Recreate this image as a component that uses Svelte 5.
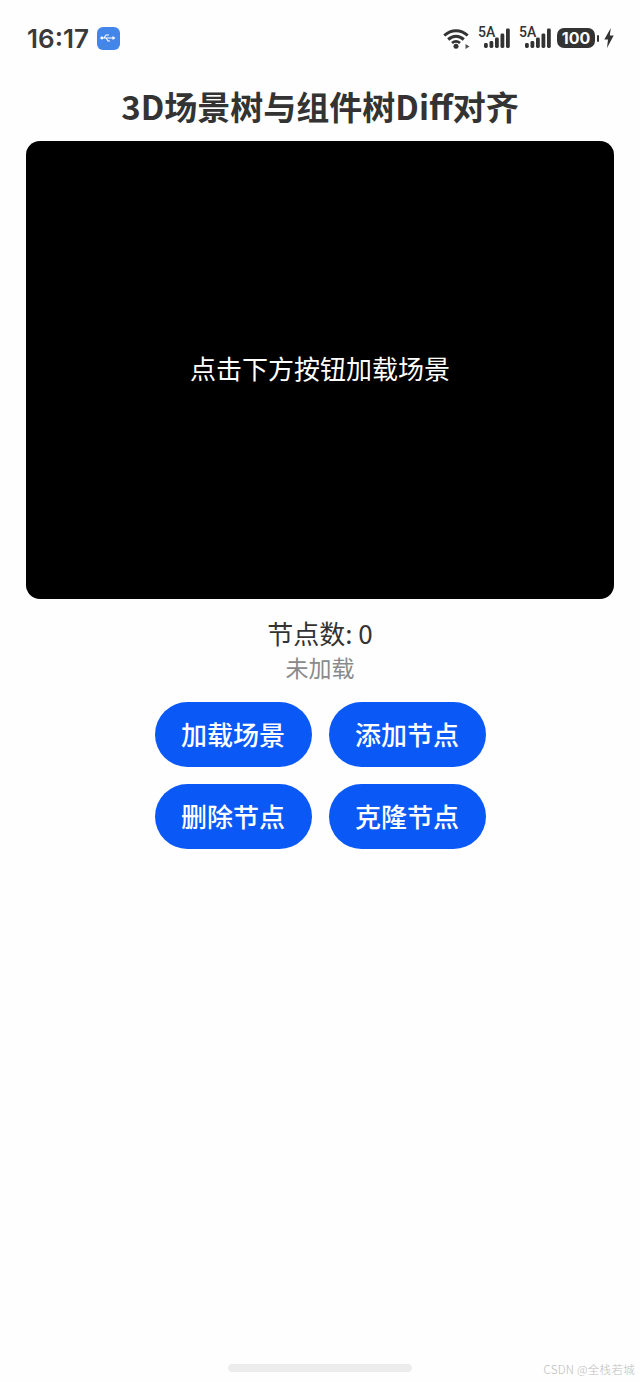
<script lang="ts">
	let nodeCount = $state(0);
	let status = $state('未加载');

	const actions = ['加载场景', '添加节点', '删除节点', '克隆节点'];
</script>

<div class="page">
	<header class="status-bar">
		<div class="status-left">
			<span class="clock">16:17</span>
			<span class="usb-badge">
				<svg width="16" height="10" viewBox="0 0 16 10">
					<path d="M1 5h12M4 5l2-3h3M6 5l2 3h2" fill="none" stroke="#fff" stroke-width="1.1" />
					<path d="M12.5 3l3 2-3 2z" fill="#fff" />
					<circle cx="1.8" cy="5" r="1.4" fill="#fff" />
				</svg>
			</span>
		</div>
		<div class="status-right">
			<svg class="wifi" width="27" height="21" viewBox="0 0 27 21">
				<path d="M1.300 7.500C8.300 1 17.700 1 24.700 7.500" fill="none" stroke="#333" stroke-width="3" />
				<path d="M5.200 11.500C10 7.300 16 7.300 20.800 11.500" fill="none" stroke="#333" stroke-width="3" />
				<path d="M9 15C11.500 13 14.500 13 17 15" fill="none" stroke="#333" stroke-width="2.800" />
				<circle cx="13" cy="18.300" r="2.500" fill="#333" />
				<path d="M22.500 16l4 2.500-4 2.500z" fill="#555" />
			</svg>
			{#each [0, 1] as sim}
				<span class="signal" data-sim={sim}>
					<span class="sim-label">5A</span>
					<svg width="27" height="21" viewBox="0 0 27 21">
						<rect x="0" y="15" width="3.800" height="5" rx="1.400" fill="#333" />
						<rect x="5.500" y="13" width="3.800" height="7" rx="1.400" fill="#333" />
						<rect x="11" y="9.500" width="3.800" height="10.500" rx="1.400" fill="#333" />
						<rect x="16.500" y="5.500" width="3.800" height="14.500" rx="1.400" fill="#333" />
						<rect x="22" y="0.500" width="3.800" height="19.500" rx="1.400" fill="#333" />
					</svg>
				</span>
			{/each}
			<span class="battery">
				<span class="battery-body">100</span>
				<span class="battery-cap"></span>
			</span>
			<svg class="bolt" width="10" height="20" viewBox="0 0 10 20">
				<path d="M6.800 0L0.300 11.500H4L3 20L9.700 7.500H5.800z" fill="#333" />
			</svg>
		</div>
	</header>

	<main class="content">
		<h1 class="title">3D场景树与组件树Diff对齐</h1>

		<div class="viewport">
			<span>点击下方按钮加载场景</span>
		</div>

		<div class="node-count">节点数: {nodeCount}</div>
		<div class="load-status">{status}</div>

		<div class="actions">
			{#each actions as label}
				<button class="action-btn">{label}</button>
			{/each}
		</div>
	</main>

	<footer class="bottom">
		<div class="home-bar"></div>
		<span class="watermark">CSDN @全栈若城</span>
	</footer>
</div>

<style>
	:global(body) {
		margin: 0;
		background: #fff;
	}

	.page {
		height: 1382px;
		display: flex;
		flex-direction: column;
		background: #fefefe;
		font-family: "Noto Sans CJK SC", "Noto Sans", sans-serif;
		color: #333;
		overflow: hidden;
	}

	.status-bar {
		height: 76px;
		padding: 0 26px 0 27px;
		box-sizing: border-box;
		display: flex;
		justify-content: space-between;
		align-items: center;
		flex-shrink: 0;
	}

	.status-left,
	.status-right {
		display: flex;
		align-items: center;
	}

	.status-left {
		gap: 8px;
	}

	.clock {
		font-family: Inter, "Noto Sans", sans-serif;
		font-size: 26px;
		font-weight: 600;
		color: #3a3a3a;
	}

	.usb-badge {
		width: 23px;
		height: 23px;
		border-radius: 6px;
		background: #4485ea;
		display: flex;
		align-items: center;
		justify-content: center;
	}

	.signal {
		position: relative;
		display: flex;
		justify-content: flex-end;
		height: 21px;
		width: 33px;
		margin-left: 8px;
	}

	.signal svg {
		display: block;
	}

	.sim-label {
		position: absolute;
		left: 0;
		top: -3px;
		font-family: Roboto, sans-serif;
		font-size: 14px;
		font-weight: 500;
		line-height: 14px;
		color: #333;
	}

	.battery {
		display: flex;
		align-items: center;
		gap: 2px;
		margin-left: 5px;
	}

	.battery-body {
		width: 38px;
		height: 20px;
		border-radius: 7px;
		background: #333;
		color: #fff;
		font-family: Inter, sans-serif;
		font-size: 16px;
		font-weight: 700;
		line-height: 20px;
		text-align: center;
	}

	.battery-cap {
		width: 2px;
		height: 7px;
		border-radius: 1px;
		background: #333;
	}

	.bolt {
		margin-left: 5px;
	}

	.content {
		flex: 1;
		display: flex;
		flex-direction: column;
		align-items: center;
		padding: 0 26px;
	}

	.title {
		margin: 7px 0 12px;
		height: 46px;
		font-size: 33px;
		line-height: 46px;
		font-weight: 700;
		color: #333;
		white-space: nowrap;
	}

	.viewport {
		width: 100%;
		height: 458px;
		background: #000;
		border-radius: 14px;
		display: flex;
		align-items: center;
		justify-content: center;
		flex-shrink: 0;
		color: #fff;
		font-size: 26px;
		line-height: 36px;
		padding-bottom: 4px;
		box-sizing: border-box;
	}

	.node-count {
		margin-top: 15px;
		font-size: 26px;
		line-height: 38px;
		color: #333;
	}

	.load-status {
		margin-top: -1px;
		font-size: 23px;
		line-height: 32px;
		color: #8a8a8a;
	}

	.actions {
		margin-top: 19px;
		display: grid;
		grid-template-columns: 157px 157px;
		gap: 17px;
	}

	.action-btn {
		height: 65px;
		padding: 0 0 3px;
		border: none;
		border-radius: 33px;
		background: #0a59f7;
		color: #fff;
		font-family: inherit;
		font-size: 26px;
		font-weight: 500;
	}

	.bottom {
		height: 46px;
		position: relative;
		display: flex;
		justify-content: center;
		flex-shrink: 0;
	}

	.home-bar {
		width: 184px;
		height: 8px;
		margin-top: 28px;
		border-radius: 4px;
		background: #ececec;
	}

	.watermark {
		position: absolute;
		right: 5px;
		top: 25px;
		font-size: 11.500px;
		font-weight: 300;
		color: #bdbdbd;
		letter-spacing: 0.3px;
	}
</style>
